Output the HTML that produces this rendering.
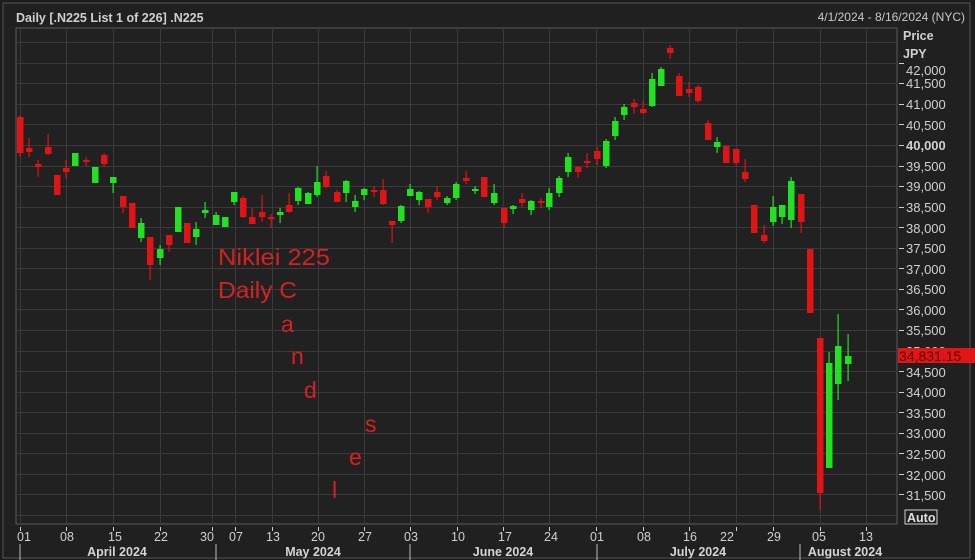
<!DOCTYPE html>
<html><head><meta charset="utf-8"><style>
html,body{margin:0;padding:0;background:#1b1b1b;width:975px;height:560px;overflow:hidden}
svg{display:block}
</style></head><body>
<svg width="975" height="560" viewBox="0 0 975 560" xmlns="http://www.w3.org/2000/svg" font-family="'Liberation Sans',sans-serif">
<rect x="0" y="0" width="975" height="560" fill="#1c1c1c"/>
<rect x="3" y="3" width="967" height="555" fill="#202020" stroke="#555" stroke-width="1"/>
<rect x="16" y="28" width="881" height="496" fill="#212121" stroke="#5a5a5a" stroke-width="1"/>
<g id="grid" stroke="#3a3a3a" stroke-width="1"></g>
<g id="candles"></g>
<text x="16" y="22" fill="#cfcfcf" font-size="12.5" font-weight="bold">Daily [.N225 List 1 of 226] .N225</text>
<text x="965" y="21" fill="#c8c8c8" font-size="12" text-anchor="end">4/1/2024 - 8/16/2024 (NYC)</text>
<text x="903" y="40" fill="#d0d0d0" font-size="12.5" font-weight="bold">Price</text>
<text x="903" y="58" fill="#d0d0d0" font-size="12.5" font-weight="bold">JPY</text>
<g fill="#d0d0d0" font-size="13">
<text x="906" y="75">42,000</text>
<text x="906" y="88">41,500</text>
<text x="906" y="109">41,000</text>
<text x="906" y="130">40,500</text>
<text x="906" y="150" font-weight="bold">40,000</text>
<text x="906" y="171">39,500</text>
<text x="906" y="191">39,000</text>
<text x="906" y="212">38,500</text>
<text x="906" y="233">38,000</text>
<text x="906" y="253">37,500</text>
<text x="906" y="274">37,000</text>
<text x="906" y="294">36,500</text>
<text x="906" y="315">36,000</text>
<text x="906" y="335">35,500</text>
<text x="906" y="356">35,000</text>
<text x="906" y="377">34,500</text>
<text x="906" y="397">34,000</text>
<text x="906" y="418">33,500</text>
<text x="906" y="438">33,000</text>
<text x="906" y="459">32,500</text>
<text x="906" y="480">32,000</text>
<text x="906" y="500">31,500</text>
</g>
<g id="ticks" stroke="#cfcfcf" stroke-width="1"></g>
<rect x="898" y="348" width="77" height="15" fill="#e01515"/>
<text x="899" y="361" fill="#5a0000" font-size="14">34,831.15</text>
<rect x="905" y="510" width="32" height="14" fill="none" stroke="#d0d0d0"/>
<text x="907" y="522" fill="#e0e0e0" font-size="12.5" font-weight="bold">Auto</text>
<g fill="#cfcfcf" font-size="12.5" text-anchor="middle">
<text x="24" y="541">01</text><text x="67" y="541">08</text><text x="115" y="541">15</text><text x="161" y="541">22</text><text x="207" y="541">30</text>
<text x="236" y="541">07</text><text x="273" y="541">13</text><text x="318" y="541">20</text><text x="365" y="541">27</text><text x="411" y="541">03</text>
<text x="458" y="541">10</text><text x="505" y="541">17</text><text x="551" y="541">24</text><text x="597" y="541">01</text><text x="644" y="541">08</text>
<text x="690" y="541">16</text><text x="727" y="541">22</text><text x="774" y="541">29</text><text x="819" y="541">05</text><text x="866" y="541">13</text>
</g>
<g fill="#d4d4d4" font-size="12.5" font-weight="bold" text-anchor="middle">
<text x="117" y="556">April 2024</text><text x="313" y="556">May 2024</text><text x="503" y="556">June 2024</text><text x="698" y="556">July 2024</text><text x="845" y="556">August 2024</text>
</g>
<g stroke="#bdbdbd" stroke-width="1">
<line x1="20" y1="544" x2="20" y2="560"/><line x1="216" y1="544" x2="216" y2="560"/><line x1="410" y1="544" x2="410" y2="560"/><line x1="597" y1="544" x2="597" y2="560"/><line x1="800" y1="544" x2="800" y2="560"/>
</g>
<g fill="#d42222" font-family="'Liberation Sans',sans-serif" font-size="23">
<text x="218" y="265" textLength="112" lengthAdjust="spacingAndGlyphs">Niklei 225</text>
<text x="218" y="298" textLength="79" lengthAdjust="spacingAndGlyphs">Daily C</text>
<text x="281" y="332">a</text>
<text x="291" y="364">n</text>
<text x="304" y="398">d</text>
<text x="365" y="432">s</text>
<text x="349" y="465">e</text>
<text x="332" y="498">l</text>
</g>
</svg>
<script>
var NS="http://www.w3.org/2000/svg";
function el(p,t,a){var e=document.createElementNS(NS,t);for(var k in a)e.setAttribute(k,a[k]);p.appendChild(e);return e;}
var g=document.getElementById('grid');
for(var i=-5;i<=18;i++){var y=Math.round(145+i*20.55)+0.5;if(y>28&&y<524)el(g,'line',{x1:16,y1:y,x2:897,y2:y});}
var xs=[20,66,113,160,212,235,272,318,364,410,457,503,549,596,643,689,736,773,820,866];
var tk=document.getElementById('ticks');
xs.forEach(function(x){el(g,'line',{x1:x+.5,y1:28,x2:x+.5,y2:524});el(tk,'line',{x1:x+.5,y1:527,x2:x+.5,y2:531});});
for(var i=-4;i<=17;i++){var y=Math.round(145+i*20.55)+0.5;el(tk,'line',{x1:899,y1:y,x2:904,y2:y});}
var C=[
[20,115,157,117,153,'r'],[29,138,157,148,152,'r'],[38,160,177,164,167,'r'],[48,134,155,147,154,'r'],[57,175,195,175,195,'r'],
[66,160,178,168,172,'r'],[75,153,166,153,166,'g'],[86,157,166,160,162,'r'],[95,167,183,167,183,'g'],[104,153,167,155,164,'r'],
[113,177,193,177,183,'g'],[123,196,213,196,207,'r'],[132,203,228,203,228,'r'],[141,218,242,223,238,'g'],[150,237,280,237,265,'r'],
[160,245,265,249,258,'g'],[169,235,252,235,245,'r'],[178,207,232,207,232,'g'],[187,223,243,223,243,'r'],[196,222,245,229,237,'g'],
[205,202,218,210,213,'g'],[216,212,225,215,225,'g'],[225,217,227,217,227,'g'],[234,192,205,192,202,'g'],[243,196,218,198,217,'r'],
[252,208,224,217,224,'r'],[262,195,222,212,217,'r'],[271,214,228,217,219,'r'],[280,208,223,212,215,'g'],[289,193,213,205,212,'r'],
[298,187,205,188,201,'g'],[308,192,204,193,204,'g'],[317,166,197,182,195,'g'],[326,171,188,176,187,'r'],[337,190,202,192,202,'r'],
[346,180,202,181,193,'g'],[355,195,212,201,207,'g'],[364,188,200,189,195,'g'],[374,186,197,190,192,'r'],[383,179,205,190,204,'r'],
[392,221,243,221,225,'r'],[401,205,223,206,221,'g'],[410,184,196,189,196,'g'],[419,191,205,192,200,'g'],[428,199,213,199,207,'r'],
[437,186,200,192,197,'r'],[447,196,205,198,203,'g'],[456,182,200,184,198,'g'],[466,171,184,178,181,'r'],[475,186,194,189,191,'g'],
[484,177,197,177,197,'r'],[494,184,205,193,203,'g'],[504,208,228,208,223,'r'],[513,205,214,206,209,'g'],[522,193,207,199,203,'r'],
[531,200,215,201,210,'g'],[541,198,208,201,203,'r'],[549,188,210,193,207,'g'],[559,176,197,178,193,'g'],[568,153,177,157,172,'g'],
[578,166,178,167,172,'r'],[587,153,168,161,163,'r'],[597,147,165,151,159,'r'],[606,139,168,141,166,'g'],[615,117,140,121,136,'g'],
[624,104,120,107,115,'g'],[634,99,114,103,107,'r'],[643,101,114,109,113,'r'],[652,73,107,79,106,'g'],[661,67,86,69,86,'g'],
[670,45,59,48,53,'r'],[679,73,96,76,96,'r'],[689,82,97,89,93,'r'],[698,85,103,87,101,'r'],[708,120,140,123,140,'r'],
[717,137,153,142,147,'g'],[726,146,163,146,163,'r'],[736,149,165,149,163,'r'],[745,159,182,172,179,'r'],[754,205,233,205,233,'r'],
[764,225,243,235,241,'r'],[773,196,226,207,222,'g'],[782,205,224,205,217,'g'],[791,177,228,181,220,'g'],[801,194,233,194,222,'r'],
[810,249,313,249,313,'r'],[820,338,510,338,493,'r'],[829,352,468,363,468,'g'],[838,314,400,346,384,'g'],[848,334,381,356,364,'g']];
var cg=document.getElementById('candles');
C.forEach(function(c){var col=c[5]=='r'?'#e01414':'#22e022';
el(cg,'rect',{x:c[0]-0.5,y:c[1],width:1.2,height:c[2]-c[1],fill:col});
el(cg,'rect',{x:c[0]-3,y:c[3],width:6.5,height:Math.max(2,c[4]-c[3]),fill:col});});
</script>
</body></html>
